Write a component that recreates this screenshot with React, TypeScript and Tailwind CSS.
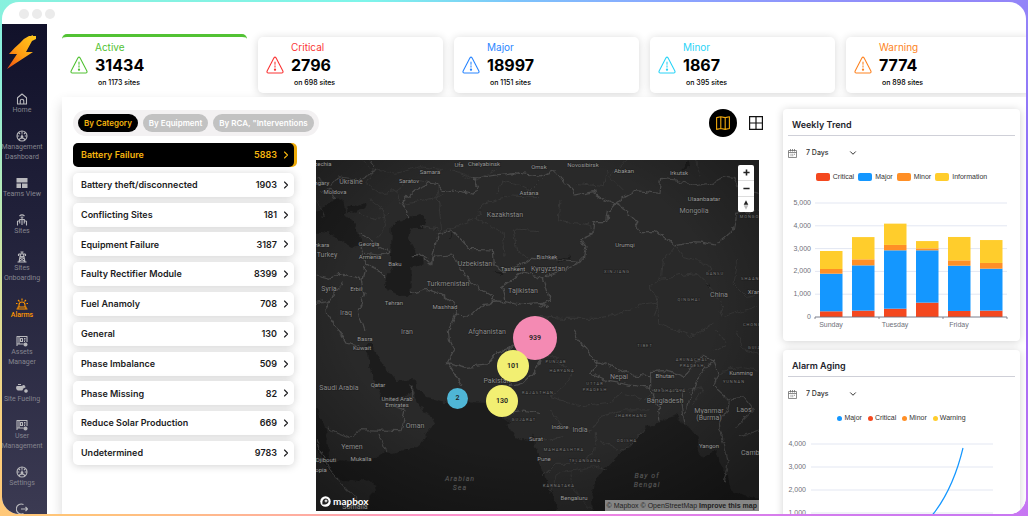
import { useState } from "react";
import type { ReactNode } from "react";
import { ChevronDown, ChevronRight } from "lucide-react";

const stats = [
    { name: "Active", count: 31434, sites: 1173, color: "text-[#52c234]" },
    { name: "Critical", count: 2796, sites: 698, color: "text-[#fa3535]" },
    { name: "Major", count: 18997, sites: 1151, color: "text-[#2a86ff]" },
    { name: "Minor", count: 1867, sites: 395, color: "text-[#2bd4f7]" },
    { name: "Warning", count: 7774, sites: 898, color: "text-[#fd8423]" },
];

const tabs = ["By Category", "By Equipment", "By RCA, \"Interventions"];

const categories = [
    { name: "Battery Failure", count: 5883 },
    { name: "Battery theft/disconnected", count: 1903 },
    { name: "Conflicting Sites", count: 181 },
    { name: "Equipment Failure", count: 3187 },
    { name: "Faulty Rectifier Module", count: 8399 },
    { name: "Fuel Anamoly", count: 708 },
    { name: "General", count: 130 },
    { name: "Phase Imbalance", count: 509 },
    { name: "Phase Missing", count: 82 },
    { name: "Reduce Solar Production", count: 669 },
    { name: "Undetermined", count: 9783 },
];

const gaugeIcon = (
    <>
        <circle cx="12" cy="12" r="10" />
        <path d="M12 2.500v5M2.500 12h4M17.500 12h4M5.500 5.500l2.500 2.500M18.500 5.500 16 8M12 9v5M6 20c1-3 3-4 6-4s5 1 6 4" />
        <circle cx="12" cy="14" r="1.800" fill="currentColor" />
    </>
);

const boardIcon = (
    <>
        <path d="M2 22V3h20v11M2 18h13M6 3v15" />
        <path d="M9 7h4v6H9zM16 7h3M16 10h3M16 13h2" />
        <circle cx="19" cy="19" r="3" fill="currentColor" />
    </>
);

const navItems: { name: string; lines: string[]; icon: ReactNode }[] = [
    {
        name: "home",
        lines: ["Home"],
        icon: <path d="M3 9.500 12 2l9 7.500V22H3zM8.500 22v-6a3.500 3.500 0 0 1 7 0v6" />,
    },
    { name: "dashboard", lines: ["Management", "Dashboard"], icon: gaugeIcon },
    {
        name: "teams",
        lines: ["Teams View"],
        icon: <path d="M1 2h22v9H1zM1 13h9v9H1zM12 13h11v9H12z" fill="currentColor" stroke="none" />,
    },
    {
        name: "sites",
        lines: ["Sites"],
        icon: <path d="M7 4c3-3 7-3 10 0M9.500 7c2-1.500 3-1.500 5 0M12 8v14M7.500 10v9M16.500 10v9M3 14v9M21 14v9M3 14h4M17 14h4M7.500 11h9" />,
    },
    {
        name: "onboarding",
        lines: ["Sites", "Onboarding"],
        icon: <path d="M9 2h6M12 2v4M5 6h14M5 6v4M19 6v4M9 6 6 22M15 6l3 16M8.500 10l7 4M15.500 10l-7 4M8 14l9 6M16 14l-9 6M3 22h18" />,
    },
    {
        name: "alarms",
        lines: ["Alarms"],
        icon: <path d="M6 18v-4a6 6 0 0 1 12 0v4M1 22h22M4 22v-4h16v4M12 1v4M4 4l3 3M20 4l-3 3M0 11h3M21 11h3" />,
    },
    { name: "assets", lines: ["Assets", "Manager"], icon: boardIcon },
    {
        name: "fueling",
        lines: ["Site Fueling"],
        icon: (
            <g fill="currentColor">
                <path d="M2 9h9l5-2 2 3-4 2-2 4H4c-3-1-3-5-2-7zM4 5h6" />
                <circle cx="20" cy="18" r="2.500" />
            </g>
        ),
    },
    { name: "users", lines: ["User", "Management"], icon: boardIcon },
    { name: "settings", lines: ["Settings"], icon: gaugeIcon },
    {
        name: "logout",
        lines: ["Logout"],
        icon: <path d="M15 3a10 10 0 1 0 0 18M10 12h13M19 8l4 4-4 4" />,
    },
];

// Stroked country borders, drawn at three times the map's scale
const northBorders = [
    "M300 205 275 160 285 145 305 125 340 110 365 98 380 100 400 125 430 120 490 132 505 110 490 85 560 75 610 68 690 78 735 62 795 135 850 125 885 150 915 162 940 145 980 122 1050 130 1055 85 1100 90 1150 108 1200 100 1240 80 1270 85 1290 120 1350 130",
    "M915 162 945 180 980 215 990 245 1040 245 1095 287 1160 275 1220 285 1270 240 1280 190 1350 180",
    "M915 162 895 185 890 215 855 215 850 250 810 268 825 290 815 335 760 360 700 385 720 450 690 470",
    "M365 340 382 252 430 243 480 298 550 300 553 345 580 365 630 345 660 325 760 330 815 335",
    "M305 315 325 310 360 338 380 318 430 315 440 335 480 395 550 440 545 452 585 455 575 410 640 365 700 385",
    "M305 430 350 418 390 430 430 460 440 495 480 500 520 460 585 455 630 465 700 460 720 470",
    "M437 495 420 530 415 540",
    "M20 375 60 385 90 370 150 385 165 430 145 480 165 540M150 290 165 340 215 365 225 385M165 310 205 315 240 310M100 400 50 455 20 460M45 460 50 490 85 545",
    "M20 90 60 105 85 80 150 90 200 60 180 30M30 130 60 115 80 148M150 250 190 275 240 305M165 345 155 400",
];

const southBorders = [
    "M415 0 418 30 432 60 412 98 440 140 455 170M412 98 470 112 530 105 560 70 600 55 640 20 690 0",
    "M85 0 110 40 150 50M50 290 80 310 120 325 145 302 270 305 285 240 225 220M210 315 230 368M305 170 306 200M20 330 60 420 140 510",
    "M790 0 815 40 850 90 860 98 845 130 900 155 960 165 1022 175M860 95 920 115 970 135 1020 140 1025 125 1060 122 1095 130 1120 140 1150 105 1180 75 1210 90 1225 130 1210 170 1255 210 1250 240 1225 280 1240 330 1255 400 1240 460",
    "M1022 130 1022 175 1030 200 1045 230 1050 275M1030 178 1120 182 1115 210 1125 285M1210 90 1160 150 1140 200 1130 250M1255 210 1300 200 1330 240 1280 290M1290 320 1350 300",
    "M600 170 640 160 670 130 690 90 720 40M590 250 640 240 690 250",
];

const regionLines = [
    "M150 30 190 60 170 100 210 130 260 120 270 160M200 60 260 70 330 50 400 60M260 120 300 90 360 100M180 150 220 180 230 230 200 260M150 190 200 210 240 190M280 160 400 140M380 100 395 240 330 225M400 245 500 205 580 250 585 320M500 205 520 160 610 135 690 140",
    "M560 130 580 90 660 120 700 80M750 150 745 210 840 225 850 250M610 240 690 245M610 240 620 300 660 325M800 100 880 110 890 60M950 30 900 80 940 120M1160 30 1170 80M1095 287 1060 330 1055 380 1020 405 1045 460 1030 500M1095 287 1120 320 1160 330 1200 350 1190 380M1055 385 1160 370 1200 410 1240 470 1230 500M1280 330 1270 400 1310 440 1350 430",
    "M690 500 760 505 860 505 920 495 990 465 1045 460 1050 520 1150 560 1210 520M1240 500 1340 470M40 200 20 150M420 60 500 90 560 60",
];

const stateLines = [
    "M690 60 740 90 790 130 760 170 720 200 810 230 900 220 930 190M720 240 760 290 840 310 870 260 940 240 1020 240M860 310 850 370 800 400 740 400 700 440M700 330 760 320M870 330 920 360 960 350 1000 300M720 490 740 430 800 420 850 410 890 420M930 190 1000 210 1040 180M780 430 790 480 850 540",
    "M1225 130 1280 110 1340 120M1210 60 1250 40 1220 0M1280 0 1300 60 1350 70M1120 180 1180 170 1150 230",
];

type Label = [text: string, x: number, y: number, kind?: "country" | "region" | "sea"];

const mapLabels: Label[] = [
    ["Czechia", 5, 6], ["Hungary", 2, 25], ["Ukraine", 35, 24, "country"], ["Moldova", 19, 34],
    ["Samara", 114, 14], ["Saratov", 93, 23], ["Ufa", 143, 7], ["Chelyabinsk", 168, 6], ["Omsk", 223, 9],
    ["Novosibirsk", 267, 7], ["Abakan", 308, 13], ["Irkutsk", 363, 15], ["Ulaanbaatar", 388, 41],
    ["Mongolia", 378, 53, "country"], ["Astana", 213, 35], ["Kazakhstan", 189, 57, "country"],
    ["Ankara", 4, 87], ["Turkey", 11, 97, "country"], ["Georgia", 53, 86], ["Armenia", 54, 99],
    ["Baku", 79, 106], ["Uzbekistan", 159, 106, "country"], ["Tashkent", 197, 111],
    ["Kyrgyzstan", 232, 111, "country"], ["Bishkek", 231, 99], ["Turkmenistan", 132, 126, "country"],
    ["Tajikistan", 207, 133, "country"], ["Syria", 13, 131, "country"], ["Erbil", 40, 131],
    ["Tehran", 78, 145], ["Mashhad", 129, 149], ["Iraq", 30, 155, "country"], ["Urumqi", 309, 87],
    ["XINJIANG", 301, 113, "region"], ["GANSU", 399, 115, "region"], ["QINGHAI", 373, 141, "region"],
    ["China", 403, 137, "country"], ["Xi'an", 438, 134], ["SHAANXI", 437, 120, "region"],
    ["MONGOLIA", 438, 58, "region"], ["CHONGQING", 443, 166, "region"], ["Basra", 49, 181],
    ["Kuwait", 46, 190], ["Iran", 91, 174, "country"], ["Afghanistan", 171, 174, "country"],
    ["Saudi Arabia", 23, 230, "country"], ["Qatar", 62, 227], ["United Arab", 81, 241],
    ["Emirates", 81, 247], ["Pakistan", 181, 223, "country"], ["Oman", 99, 268, "country"],
    ["Yemen", 36, 289, "country"], ["Mukalla", 45, 301], ["Djibouti", 10, 302], ["Ethiopia", 0, 312],
    ["Somalia", 39, 349, "country"], ["Arabian", 144, 321, "sea"], ["Sea", 144, 330, "sea"],
    ["RAJASTHAN", 222, 234, "region"], ["GUJARAT", 208, 261, "region"], ["Surat", 220, 281],
    ["TIBET", 329, 187, "region"], ["PUNJAB", 240, 203, "region"], ["HARYANA", 246, 212, "region"],
    ["UTTAR", 279, 225, "region"], ["PRADESH", 279, 231, "region"], ["Nepal", 303, 219, "country"],
    ["Bhutan", 349, 218], ["ARUNACHAL", 376, 201, "region"], ["PRADESH", 376, 207, "region"],
    ["Kunming", 425, 215], ["YUNNAN", 418, 223, "region"], ["GUIZHOU", 444, 189, "region"],
    ["MEGHALAYA", 354, 232, "region"], ["Bangladesh", 349, 243, "country"],
    ["Myanmar", 393, 253, "country"], ["(Burma)", 393, 260, "country"], ["Laos", 428, 252, "country"],
    ["JHARKHAND", 315, 257, "region"], ["Indore", 244, 269], ["India", 264, 272, "country"],
    ["ODISHA", 311, 282, "region"], ["MAHARASHTRA", 248, 291, "region"], ["TELANGANA", 269, 302, "region"],
    ["Pune", 228, 301], ["Yangon", 393, 288], ["Cambodia", 441, 295, "country"],
    ["KARNATAKA", 243, 327, "region"], ["Bengaluru", 258, 340], ["Bay of", 331, 318, "sea"],
    ["Bengal", 331, 327, "sea"],
];

const labelStyles = {
    city: "fill-[#9a9a9a] text-[6px]",
    country: "fill-[#8a8a8a] text-[7px]",
    region: "fill-[#7c7c7c] text-[4px] tracking-[1px]",
    sea: "fill-[#5c5c5c] text-[7px] italic tracking-[1px]",
};

const seriesColors = ["#f4481f", "#1497ff", "#ff8f26", "#ffcd2c"];

// Cumulative totals per day: critical, major, minor, information
const weekly = [
    [250, 1900, 2105, 2895],
    [280, 2265, 2530, 3505],
    [365, 2925, 3160, 4095],
    [630, 2925, 3010, 3330],
    [265, 2250, 2485, 3510],
    [280, 2120, 2370, 3375],
];

const AlertIcon = () => (
    <svg className="h-[18px] w-[18px] shrink-0" viewBox="0 0 18 18" fill="none" stroke="currentColor" strokeWidth="1.100" strokeLinecap="round" strokeLinejoin="round" aria-hidden="true">
        <path d="M8 1.800Q9 .5 10 1.800L17 15.200Q17.200 16.900 15.800 17H2.200Q.8 16.900 1 15.200Z" />
        <path d="M9 6v2.300M9 9.800v1.300" />
        <circle cx="9" cy="13.700" r=".6" fill="currentColor" />
    </svg>
);

const Sidebar = () => (
    <nav className="w-[45px] shrink-0 overflow-hidden bg-linear-to-b from-[#11112a] to-[#3b3a52] font-[Roboto,sans-serif]">
        <svg className="mt-[10px] ml-1 h-9 w-8" viewBox="0 0 32 36" aria-label="Logo">
            <defs>
                <linearGradient id="bolt" x1="1" y1="0" x2="0" y2="1">
                    <stop offset="0" stopColor="#ffcb1f" />
                    <stop offset=".55" stopColor="#ff9d12" />
                    <stop offset="1" stopColor="#ee4b12" />
                </linearGradient>
            </defs>
            <path d="M1 35 11 20H3Q8 14 14 9q4-5 9-7l2 0 1.500-1 .5 1h3v3l-4 2L20 18h7Z" fill="url(#bolt)" />
        </svg>
        <ul className="mt-[23px]">
            {navItems.map((item) => (
                <li key={item.name} className="pb-[15px]">
                    <a href={`#${item.name}`} className={`flex flex-col items-center pr-[5px] text-[7px] leading-[10px] whitespace-nowrap ${item.name === "alarms" ? "font-medium text-[#ff9500]" : "text-[#85858f]"}`}>
                        <svg className={`h-3 w-3 ${item.name === "alarms" ? "" : "text-[#b9b9bd]"}`} viewBox="0 0 24 24" fill="none" stroke="currentColor" strokeWidth="2.200" strokeLinejoin="round" aria-hidden="true">
                            {item.icon}
                        </svg>
                        {item.lines.map((line) => (
                            <span key={line}>{line}</span>
                        ))}
                    </a>
                </li>
            ))}
        </ul>
    </nav>
);

const StatCards = () => (
    <section className="flex items-end gap-[11px] overflow-hidden pt-[10px] pb-1" aria-label="Alarm totals">
        {stats.map((stat, i) => (
            <div
                key={stat.name}
                className={`flex w-[185px] shrink-0 items-center gap-[7px] rounded-[5px] bg-white pl-2 ${i === 0 ? "h-[59px] border-t-[3px] border-[#52c234]" : "h-14 shadow-[0_1px_8px_rgba(0,0,0,0.16)]"} ${stat.color}`}
            >
                <AlertIcon />
                <div className="whitespace-nowrap">
                    <h2 className="text-[10px] leading-3">{stat.name}</h2>
                    <p className="text-base leading-6 font-bold text-black">{stat.count}</p>
                    <p className="pl-[3px] text-[7px] leading-3 font-medium text-black">on {stat.sites} sites</p>
                </div>
            </div>
        ))}
    </section>
);

const CategoryList = () => {
    const [selected, setSelected] = useState("Battery Failure");

    return (
        <ul className="flex h-[322px] w-[221px] shrink-0 flex-col justify-between">
            {categories.map((item) => (
                <li key={item.name}>
                    <button
                        type="button"
                        onClick={() => setSelected(item.name)}
                        className={`flex h-6 w-full items-center rounded-[5px] pr-[2px] pl-2 text-[9px] font-semibold ${selected === item.name ? "bg-black text-[#f5b50f] shadow-[3px_0_0_#edaa08]" : "bg-white text-[#1c1c1e] shadow-[0_1px_8px_rgba(0,0,0,0.18)]"}`}
                    >
                        <span className="flex-1 text-left">{item.name}</span>
                        <span>{item.count}</span>
                        <ChevronRight className="ml-[3px] h-3 w-3" strokeWidth={2.2} />
                    </button>
                </li>
            ))}
        </ul>
    );
};

const clusters = [
    { count: 939, style: "top-[156px] left-[197px] h-11 w-11 bg-[#f48ab3]" },
    { count: 101, style: "top-[190px] left-[181px] h-8 w-8 bg-[#f2ef72]" },
    { count: 130, style: "top-[225px] left-[170px] h-8 w-8 bg-[#f2ef72]" },
    { count: 2, style: "top-[228px] left-[131px] h-[21px] w-[21px] bg-[#4fb6d6]" },
];

const SiteMap = () => (
    <div className="relative flex-1 overflow-hidden bg-[#282828]">
        <svg className="h-full w-full font-[Roboto,sans-serif]" viewBox="0 0 443 351" preserveAspectRatio="xMinYMin slice" role="img" aria-label="Map of sites">
            <defs>
                <filter id="coast" x="0" y="0" width="100%" height="100%">
                    <feTurbulence type="fractalNoise" baseFrequency=".12" numOctaves="3" seed="4" />
                    <feDisplacementMap in="SourceGraphic" scale="7" xChannelSelector="R" yChannelSelector="G" />
                </filter>
                <radialGradient id="vignette" cx=".48" cy=".42" r=".7">
                    <stop offset=".6" stopColor="#000" stopOpacity="0" />
                    <stop offset="1" stopColor="#000" stopOpacity=".35" />
                </radialGradient>
            </defs>
            <rect width="443" height="351" fill="#292929" />
            <g filter="url(#coast)">
                <g transform="translate(-6 -10) scale(.3333)">
                    <g fill="#1c1c1c">
                        <path d="M0 200 45 165 65 155 80 148 100 150 105 180 100 195 120 205 145 245 152 285 130 292 100 280 80 260 50 250 0 248ZM112 168 170 160 165 170 140 188 112 185Z" />
                        <path d="M245 225 270 215 300 200 330 195 350 205 345 225 325 237 300 235 295 260 305 285 315 300 318 315 335 318 338 340 320 350 305 345 305 440 270 440 235 420 225 400 230 375 248 360 243 310 245 270Z" />
                        <path d="M415 270 430 245 435 240 425 262ZM545 365 580 365 580 375ZM740 325 780 320 775 332 750 335ZM1110 70 1135 30 1140 50ZM1185 405 1200 400 1205 415Z" />
                    </g>
                    <g fill="none" stroke="#363636" strokeWidth="3">
                        {regionLines.map((d) => <path key={d} d={d} />)}
                    </g>
                    <g fill="none" stroke="#4c4c4c" strokeWidth="3.500">
                        {northBorders.map((d) => <path key={d} d={d} />)}
                    </g>
                </g>
                <g transform="translate(-6 170) scale(.3333)">
                    <path
                        fill="#1c1c1c"
                        d="M0 200 20 235 48 300 50 340 60 390 130 392 200 380 215 370 250 372 300 355 330 340 345 315 375 280 360 255 330 235 315 200 312 172 300 165 300 190 270 205 215 210 190 140 175 85 165 45 185 45 200 80 225 110 260 150 310 148 325 175 350 200 400 215 530 218 560 245 600 275 590 290 620 325 650 335 672 310 680 360 690 400 710 450 730 500 745 560 850 560 845 490 855 450 890 410 930 370 980 330 1005 290 1050 280 1070 265 1100 255 1120 285 1135 290 1160 320 1165 370 1185 380 1220 360 1230 400 1250 440 1260 480 1300 495 1360 510 1360 570 140 570 195 480 190 455 100 450 60 430 30 370 0 300Z"
                    />
                    <g fill="none" stroke="#363636" strokeWidth="3">
                        {stateLines.map((d) => <path key={d} d={d} />)}
                    </g>
                    <g fill="none" stroke="#4c4c4c" strokeWidth="3.500">
                        {southBorders.map((d) => <path key={d} d={d} />)}
                    </g>
                </g>
            </g>
            <rect width="443" height="351" fill="url(#vignette)" />
            <g textAnchor="middle" stroke="#1e1e1e" strokeWidth="1" paintOrder="stroke">
                {mapLabels.map(([text, x, y, kind]) => (
                    <text key={`${text}${y}`} x={x} y={y} className={labelStyles[kind ?? "city"]}>{text}</text>
                ))}
            </g>
        </svg>

        {clusters.map((cluster) => (
            <button key={cluster.count} type="button" className={`absolute rounded-full font-[Roboto,sans-serif] text-[7px] font-semibold text-[#222] ${cluster.style}`}>
                {cluster.count}
            </button>
        ))}

        <div className="absolute top-[5px] right-[5px] flex w-4 flex-col divide-y divide-[#ddd] rounded-[2px] bg-white text-[#222]">
            <button type="button" aria-label="Zoom in" className="flex h-4 items-center justify-center">
                <svg className="h-[7px] w-[7px]" viewBox="0 0 7 7" stroke="currentColor" strokeWidth="1.600"><path d="M3.500.4v6.200M.4 3.500h6.200" /></svg>
            </button>
            <button type="button" aria-label="Zoom out" className="flex h-4 items-center justify-center">
                <svg className="h-[7px] w-[7px]" viewBox="0 0 7 7" stroke="currentColor" strokeWidth="1.600"><path d="M.4 3.500h6.200" /></svg>
            </button>
            <button type="button" aria-label="Reset north" className="flex h-[15px] items-center justify-center">
                <svg className="h-[10px] w-[6px]" viewBox="0 0 6 10"><path d="M3 .3 5.300 4.800H.7Z" fill="#222" /><path d="M3 9.700.7 5.200h4.600Z" fill="#bbb" /></svg>
            </button>
        </div>

        <a href="#mapbox" className="absolute bottom-1 left-1 flex items-center gap-[2px] font-[Lato,sans-serif] text-[10px] leading-3 font-bold text-white">
            <svg className="h-[11px] w-[11px]" viewBox="0 0 22 22" aria-hidden="true">
                <circle cx="11" cy="11" r="10.500" fill="#fff" />
                <path d="M5 17C4 10 6 5 12 5a5.500 5.500 0 0 1 4 9c-3 3-7 3.500-11 3Z" fill="#222" />
                <path d="m12 6 1.200 2.600L16 10l-2.800 1.200L12 14l-1.200-2.800L8 10l2.800-1.400Z" fill="#fff" />
            </svg>
            mapbox
        </a>
        <p className="absolute right-0 bottom-0 bg-[#858585] px-[2px] font-['Liberation_Sans',sans-serif] text-[7px] leading-[11px] text-[#222]">
            <a href="#mapbox">© Mapbox</a> <a href="#osm">© OpenStreetMap</a> <a href="#improve" className="font-bold">Improve this map</a>
        </p>
    </div>
);

const TrendCard = ({ title, legend, children }: { title: string; legend: ReactNode; children: ReactNode }) => (
    <section className="rounded-[4px] bg-white shadow-[0_1px_8px_rgba(0,0,0,0.18)]">
        <h2 className="mx-[5px] border-b border-[#cfd0d8] px-1 pt-2 pb-[3px] text-[9px] leading-[15px] font-semibold text-[#23232b]">{title}</h2>
        <div className="flex h-[34px] items-center px-[5px] text-[#333]">
            <svg className="h-[9px] w-[9px]" viewBox="0 0 18 18" fill="none" stroke="#666" strokeWidth="1.500" aria-hidden="true">
                <path d="M1 3h16v14H1zM1 7h16M5 0v5M9 0v5M13 0v5M5 10.500h2M8.500 10.500h2M12 10.500h2M5 13.500h2M8.500 13.500h2" />
            </svg>
            <label className="relative ml-[9px] flex items-center">
                <select aria-label={`${title} period`} className="w-[52px] appearance-none text-[7px] font-medium outline-none">
                    <option>7 Days</option>
                    <option>30 Days</option>
                </select>
                <ChevronDown className="pointer-events-none absolute right-0 h-[10px] w-[10px]" strokeWidth={2.4} />
            </label>
        </div>
        <div className="flex h-[14px] items-center justify-center font-['Liberation_Sans',sans-serif] text-[7px] text-[#333]">{legend}</div>
        {children}
    </section>
);

const WeeklyTrend = () => {
    const y = (value: number) => 133 - (value / 1000) * 22.8;

    return (
        <TrendCard
            title="Weekly Trend"
            legend={
                <ul className="flex gap-1">
                    {["Critical", "Major", "Minor", "Information"].map((name, i) => (
                        <li key={name} className="flex items-center gap-[3px]">
                            <i className="h-2 w-[14px] rounded-[2px]" style={{ background: seriesColors[i] }} />
                            {name}
                        </li>
                    ))}
                </ul>
            }
        >
            <svg className="block w-full font-['Liberation_Sans',sans-serif] text-[7px]" viewBox="0 0 237 157" role="img" aria-label="Alarms by weekday">
                {[0, 1000, 2000, 3000, 4000, 5000].map((v) => (
                    <g key={v}>
                        <path d={`M32 ${y(v)}H224`} stroke="#e3e7f2" strokeWidth="1" />
                        <text x="28" y={y(v) + 2} textAnchor="end" fill="#6e7079">{v.toLocaleString("en-US")}</text>
                    </g>
                ))}
                {weekly.map((day, i) =>
                    day.map((top, j) => (
                        <rect key={`${i}-${j}`} x={37 + i * 32} width="22.500" y={y(top)} height={y(j ? day[j - 1] : 0) - y(top)} fill={seriesColors[j]} />
                    ))
                )}
                <path d="M32 135v-2h192v2M96 133v2M160 133v2" fill="none" stroke="#6e7079" strokeWidth=".8" />
                <g fill="#6e7079" textAnchor="middle">
                    <text x="48" y="143">Sunday</text>
                    <text x="112" y="143">Tuesday</text>
                    <text x="176" y="143">Friday</text>
                </g>
            </svg>
        </TrendCard>
    );
};

const AlarmAging = () => (
    <TrendCard
        title="Alarm Aging"
        legend={
            <ul className="flex gap-[6px]">
                {["Major", "Critical", "Minor", "Warning"].map((name, i) => (
                    <li key={name} className="flex items-center gap-[2px]">
                        <i className="h-[5px] w-[5px] rounded-full" style={{ background: seriesColors[[1, 0, 2, 3][i]] }} />
                        {name}
                    </li>
                ))}
            </ul>
        }
    >
        <svg className="block w-full font-['Liberation_Sans',sans-serif] text-[7px]" viewBox="0 0 237 157" role="img" aria-label="Alarm ages">
            {[4000, 3000, 2000, 1000, 0].map((v, i) => (
                <g key={v}>
                    <path d={`M28 ${19 + i * 23}H210`} stroke="#e3e7f2" strokeWidth="1" />
                    <text x="23" y={21 + i * 23} textAnchor="end" fill="#6e7079">{v.toLocaleString("en-US")}</text>
                </g>
            ))}
            <path d="M28 111H100C130 111 142 99 151 88C164 71 173 52 180 23" fill="none" stroke="#1497ff" strokeWidth="1.200" />
        </svg>
    </TrendCard>
);

const App = () => {
    const [tab, setTab] = useState(tabs[0]);

    return (
        <div className="h-screen overflow-hidden bg-[conic-gradient(#7cc4fb_0deg,#8aa8ff_30deg,#9385f8_63deg,#8d62f8_90deg,#c877f2_117deg,#f588e0_170deg,#ff96c8_200deg,#ffc478_240deg,#ffcf7a_250deg,#cfe6a4_270deg,#8af0dc_290deg,#7ef5ea_330deg,#7cc4fb_360deg)] p-[2px] font-[Inter,sans-serif]">
            <div className="flex h-full flex-col overflow-hidden rounded-[17px] bg-white">
                <header className="flex h-[22px] shrink-0 items-center gap-[3px] px-[17px] pt-[2px]">
                    {[0, 1, 2].map((dot) => (
                        <span key={dot} className="h-[10px] w-[10px] rounded-full bg-[#ebebeb]" />
                    ))}
                </header>
                <div className="flex min-h-0 flex-1">
                    <Sidebar />
                    <main className="flex min-w-0 flex-1 flex-col pl-[15px]">
                        <StatCards />
                        <div className="flex min-h-0 flex-1 gap-5 bg-white pt-3 pr-[6px] pl-[11px] shadow-[0_6px_12px_rgba(0,0,0,0.16)]">
                            <div className="flex min-w-0 flex-1 flex-col">
                                <div className="flex h-7 shrink-0 items-center justify-between">
                                    <div className="flex gap-[5px] rounded-full bg-[#f3f1f2] px-[5px] py-1">
                                        {tabs.map((name) => (
                                            <button
                                                key={name}
                                                type="button"
                                                onClick={() => setTab(name)}
                                                className={`h-[18px] rounded-full px-[6px] text-[8px] font-semibold whitespace-nowrap ${tab === name ? "bg-black text-[#f5b50f]" : "bg-[#c2c2c2] text-white"}`}
                                            >
                                                {name}
                                            </button>
                                        ))}
                                    </div>
                                    <div className="flex items-center gap-3">
                                        <button type="button" aria-label="Map view" className="flex h-7 w-7 items-center justify-center rounded-full bg-black">
                                            <svg className="h-[14px] w-[14px]" viewBox="0 0 14 14" fill="none" stroke="#f0a80c" strokeWidth="1.100" strokeLinejoin="round">
                                                <path d="M.6 1.600 4.800.7 9.200 1.600 13.400.7V12.500L9.200 13.400 4.800 12.500.6 13.400ZM4.800.7v11.800M9.200 1.600v11.800" />
                                            </svg>
                                        </button>
                                        <button type="button" aria-label="Grid view">
                                            <svg className="h-[14px] w-[14px]" viewBox="0 0 14 14" fill="none" stroke="#111" strokeWidth="1.200">
                                                <path d="M.6.6h12.800v12.800H.6zM7 .6v12.800M.6 7h12.800" />
                                            </svg>
                                        </button>
                                    </div>
                                </div>
                                <div className="flex min-h-0 flex-1 gap-[22px] pt-[6px] pr-1">
                                    <CategoryList />
                                    <div className="flex min-w-0 flex-1 pt-[17px] pb-[3px]">
                                        <SiteMap />
                                    </div>
                                </div>
                            </div>
                            <aside className="flex w-[237px] shrink-0 flex-col gap-[9px]">
                                <WeeklyTrend />
                                <AlarmAging />
                            </aside>
                        </div>
                    </main>
                </div>
            </div>
        </div>
    );
};

export default App;
